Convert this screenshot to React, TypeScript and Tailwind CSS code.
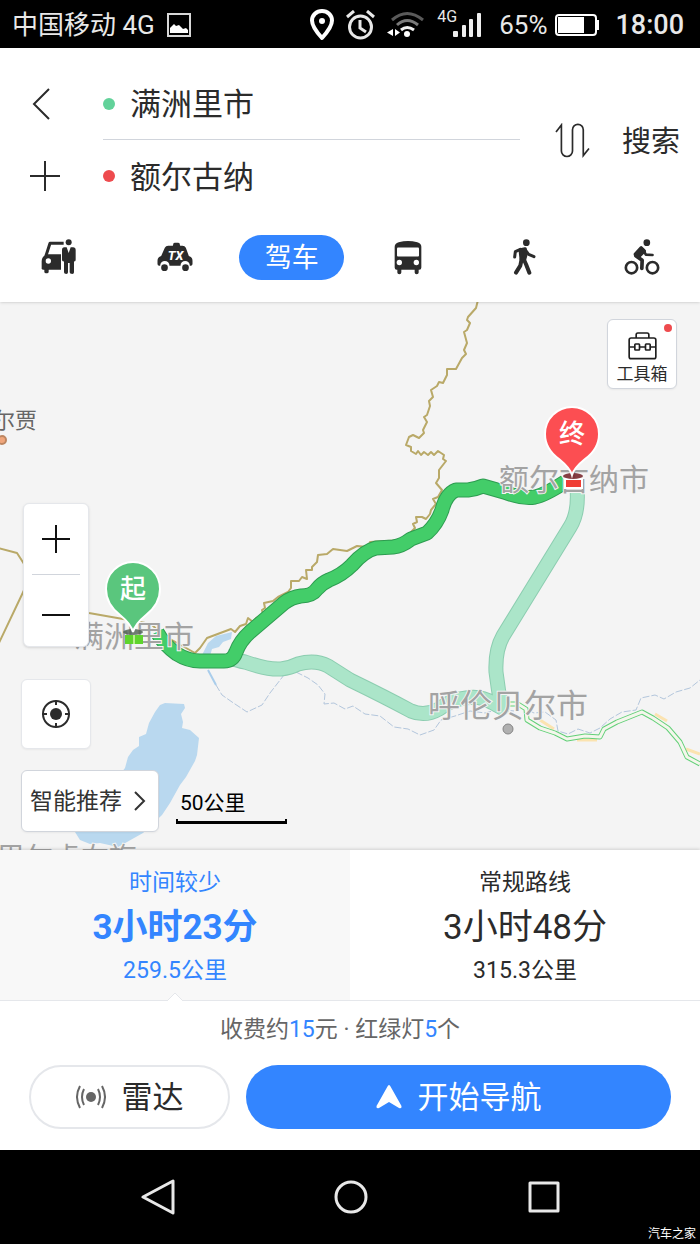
import { useState, type ReactNode } from "react";

const CarServiceIcon = () => (
  <svg width="35" height="36" viewBox="0 0 105 108" fill="none">
    <path d="M15 50 L27 13 H68" stroke="#2b2b2b" strokeWidth="9" strokeLinejoin="round" />
    <path d="M2 66 Q2 56 14 46 H60 V92 H6 Q2 92 2 88 Z" fill="#2b2b2b" />
    <rect x="10" y="86" width="13" height="17" rx="5" fill="#2b2b2b" />
    <circle cx="22" cy="66" r="8" fill="#fff" />
    <circle cx="83" cy="10" r="9" fill="#2b2b2b" />
    <path
      d="M70 25 H77 L83 42 L89 25 H96 Q104 25 104 33 V62 Q104 68 99 67 V100 Q99 105 94 105 Q86 105 86 100 V72 H81 V100 Q81 105 76 105 Q69 105 69 100 V67 Q63 68 63 62 V33 Q63 25 70 25 Z"
      fill="#2b2b2b"
    />
  </svg>
);

const TaxiIcon = () => (
  <svg width="36" height="30" viewBox="0 0 107 90">
    <path
      d="M47 11 L49 4 Q50 2 53 2 H63 Q66 2 67 4 L69 11 H76 Q83 11 86 17 L95 42 Q106 45 106 56 V66 Q106 71 101 71 H98 A14 14 0 0 0 70 71 H37 A14 14 0 0 0 9 71 H6 Q1 71 1 66 V56 Q1 45 12 42 L23 17 Q26 11 33 11 Z"
      fill="#2b2b2b"
    />
    <circle cx="22" cy="77" r="10" fill="#2b2b2b" />
    <circle cx="85" cy="77" r="10" fill="#2b2b2b" />
    <text x="55" y="55" textAnchor="middle" fill="#fff" className="font-[Roboto] text-[38px] font-extrabold italic">
      TX
    </text>
  </svg>
);

const BusIcon = () => (
  <svg width="28" height="35" viewBox="0 0 84 104">
    <path
      d="M2 20 Q2 9 14 6 Q42 -1 70 6 Q82 9 82 20 V82 Q82 89 76 89 H74 V97 Q74 102 68 102 Q62 102 62 97 V89 H22 V97 Q22 102 16 102 Q10 102 10 97 V89 H8 Q2 89 2 82 Z"
      fill="#2b2b2b"
    />
    <rect x="9" y="22" width="66" height="27" rx="3" fill="#fff" />
    <circle cx="16" cy="67" r="8" fill="#fff" />
    <circle cx="67" cy="67" r="8" fill="#fff" />
  </svg>
);

const WalkIcon = () => (
  <svg width="23" height="36" viewBox="0 0 69 108" fill="none" stroke="#2b2b2b" strokeLinecap="round" strokeLinejoin="round">
    <circle cx="40" cy="11" r="10" fill="#2b2b2b" stroke="none" />
    <path d="M22 33 L36 30 L38 48 L34 62 L25 60 Z" fill="#2b2b2b" strokeWidth="11" />
    <path d="M22 31 L7 38 L5 54" strokeWidth="9" />
    <path d="M38 34 L47 46 L63 53" strokeWidth="9" />
    <path d="M26 60 L22 80 L9 101" strokeWidth="12" />
    <path d="M32 60 L40 78 L49 101" strokeWidth="12" />
  </svg>
);

const BikeIcon = () => (
  <svg width="36" height="36" viewBox="0 0 107 108" fill="none" stroke="#2b2b2b" strokeLinecap="round" strokeLinejoin="round">
    <circle cx="22" cy="86" r="17" strokeWidth="8" />
    <circle cx="85" cy="86" r="17" strokeWidth="8" />
    <circle cx="68" cy="11" r="10" fill="#2b2b2b" stroke="none" />
    <path d="M51 27 L34 46 L42 54 L60 36 Z" fill="#2b2b2b" strokeWidth="11" />
    <path d="M57 32 L65 47 L85 48" strokeWidth="8" />
    <path d="M35 50 L54 64 L53 88" strokeWidth="11" />
  </svg>
);

const modes: { label: string; icon?: ReactNode }[] = [
  { label: "专车", icon: <CarServiceIcon key="car" /> },
  { label: "打车", icon: <TaxiIcon key="taxi" /> },
  { label: "驾车" },
  { label: "公交", icon: <BusIcon key="bus" /> },
  { label: "步行", icon: <WalkIcon key="walk" /> },
  { label: "骑行", icon: <BikeIcon key="bike" /> },
];

const routes = [
  { name: "时间较少", time: "3小时23分", distance: "259.5公里" },
  { name: "常规路线", time: "3小时48分", distance: "315.3公里" },
];

const MAIN_ROUTE =
  "M157 632 Q164 645 177 654 Q188 661 200 661 H224 Q233 661 236 652 Q240 641 250 632 L284 603 Q292 597 301 596 Q312 596 317 589 Q322 583 329 580 Q342 575 352 565 Q364 551 376 548 L393 547 Q402 546 411 539 L427 533 Q437 524 442 510 Q446 494 456 490 H468 Q476 489 483 486 L504 492 Q522 499 535 497 Q545 495 565 482";

const ALT_ROUTE =
  "M226 656 Q238 661 245 662 Q268 670 281 669 Q290 668 298 664 Q315 659 328 666 L350 680 Q385 697 411 711 Q425 717 439 709 Q452 699 466 698 Q480 695 493 703 L502 708 Q498 690 496 672 Q495 650 503 636 L570 527 Q579 513 577 488";

const HIGHWAY =
  "M508 704 L518 704 L526 709 L527 720 L540 728 L555 733 L567 739 L585 736 L600 737 L604 729 L617 722 L642 712 L653 718 L668 728 L680 742 L687 757 L700 764";

const BORDER =
  "M478 300 L476 308 L468 317 L467 320 L470 323 L467 330 L464 332 L467 343 L464 350 L466 354 L462 358 L456 369 L447 369 L447 375 L443 383 L439 382 L437 386 L431 390 L433 397 L429 401 L430 406 L427 415 L424 417 L427 422 L423 430 L424 433 L419 438 L413 435 L409 437 L406 445 L411 447 L411 451 L416 454 L418 451 L421 455 L424 452 L428 455 L431 452 L434 455 L438 451 L444 455 L443 459 L446 461 L439 470 L439 478 L436 483 L442 490 L438 497 L433 499 L436 504 L431 510 L430 514 L426 519 L422 517 L416 517 L417 522 L413 524 L415 528 L403 540 L370 542 L368 547 L357 546 L347 551 L333 549 L327 554 L318 555 L317 562 L312 567 L312 570 L306 570 L307 579 L302 577 L299 581 L291 581 L291 588 L288 592 L278 597 L273 601 L264 603 L265 608 L262 610 L263 614 L256 618 L253 622 L248 618 L246 624 L240 626 L235 632 L231 629 L223 632 L207 638 L200 648 L195 653 L163 635 L151 624 L123 619 L89 613 L60 606";

const MapCanvas = () => (
  <svg
    className="absolute inset-0 h-full w-full font-['Noto_Sans_CJK_SC',sans-serif]"
    viewBox="0 302 700 548"
    preserveAspectRatio="xMidYMid slice"
    fill="none"
  >
    {/* lakes */}
    <path
      d="M160 705 L165 703 L184 704 L185 708 L181 714 L183 722 L182 728 L190 730 L199 738 L197 755 L195 761 L186 777 L180 785 L170 803 L162 815 L143 833 L127 842 L118 847 L100 843 L90 844 L80 840 L75 832 L100 800 L125 768 L128 757 L133 750 L139 746 L139 737 L146 734 L149 723 L155 712 Z"
      fill="#b9d8ef"
    />
    <path d="M201 657 L208 643 L216 636 L232 632 L231 639 L223 642 L219 647 L212 649 L210 656 Z" fill="#b9d8ef" />
    <path d="M208 670 L216 685" stroke="#a9cdeb" strokeWidth="2" />

    {/* rivers */}
    <g stroke="#b3c6dc" strokeWidth="1" strokeDasharray="7 2">
      <path d="M216 685 L222 695 L232 702 L247 712 L262 705 L270 693 L284 675 L296 672 L308 678 L318 685 L325 694 L324 704 L334 703 L345 709 L353 706 L365 714 L380 716 L394 727 L408 729 L420 735 L434 730 L441 720 L455 716 L470 711 L485 713 L500 709 L514 711" />
      <path d="M520 706 L534 713 L545 712 L556 720 L558 731 L568 734 L578 729 L590 733 L600 728 L610 719 L622 712 L636 710 L641 698 L655 695 L664 699 L676 692 L690 688 L700 680" />
    </g>

    {/* boundaries */}
    <g stroke="#b9a968" strokeWidth="2" strokeLinejoin="round">
      <path d={BORDER} />
      <path d="M-2 548 L17 553 L26 567 M26 586 L-2 645" />
    </g>

    {/* highway heading east */}
    <path d="M540 720 L554 729 M577 740 L597 740 M655 714 L667 721 M686 749 L700 754" stroke="#fbe3b0" strokeWidth="3" />
    <g strokeLinejoin="round">
      <path d={HIGHWAY} stroke="#62d078" strokeWidth="5" />
      <path d={HIGHWAY} stroke="#f4f6ec" strokeWidth="3" />
    </g>

    {/* routes */}
    <g strokeLinejoin="round">
      <path d={ALT_ROUTE} stroke="#8ccdb0" strokeWidth="15" />
      <path d={ALT_ROUTE} stroke="#abe5c9" strokeWidth="13" />
      <path d={MAIN_ROUTE} stroke="#2d9c50" strokeWidth="15" />
      <path d={MAIN_ROUTE} stroke="#43cd69" strokeWidth="13" />
    </g>

    {/* city labels */}
    <circle cx="508" cy="729" r="5" fill="#b0b0b0" stroke="#858585" strokeWidth="1" />
    <circle cx="2" cy="440" r="4" fill="#f0a67c" stroke="#bd8661" strokeWidth="2" />
    <text x="37" y="428" textAnchor="end" fill="#666" className="text-[22px]">
      尔贾
    </text>
    <g fill="#a3a3a3" stroke="#f4f4f4" strokeWidth="2" paintOrder="stroke">
      <text x="74" y="647" className="text-[30px]">
        满洲里市
      </text>
      <text x="499" y="490" className="text-[30px]">
        额尔古纳市
      </text>
      <text x="428" y="717" className="text-[32px]">
        呼伦贝尔市
      </text>
      <text x="137" y="868" textAnchor="end" className="text-[28px]">
        新巴尔虎右旗
      </text>
    </g>

    {/* start pin */}
    <rect x="125" y="635" width="18" height="9" fill="#5fd42c" />
    <path d="M134 635 V644" stroke="#b6ee8e" strokeWidth="2" />
    <ellipse cx="133" cy="632" rx="10" ry="3" fill="#4d5f50" fillOpacity="0.8" />
    <path
      d="M133 632 Q131 624 120 615 Q106 604 106 589 A27 27 0 0 1 160 589 Q160 604 146 615 Q135 624 133 632 Z"
      fill="#5ac67d"
      stroke="#fff"
      strokeWidth="2"
    />
    <text x="133" y="598" textAnchor="middle" fill="#fff" className="text-[26px] font-medium">
      起
    </text>

    {/* end pin */}
    <rect x="565" y="479" width="17" height="9" fill="#f03e35" stroke="#fff" strokeWidth="2" />
    <ellipse cx="573" cy="476" rx="10" ry="3" fill="#7a2a30" fillOpacity="0.9" />
    <path
      d="M572 475 Q570 468 559 459 Q545 449 545 434 A27 27 0 0 1 599 434 Q599 449 585 459 Q574 468 572 475 Z"
      fill="#fc4e52"
      stroke="#fff"
      strokeWidth="2"
    />
    <text x="572" y="443" textAnchor="middle" fill="#fff" className="text-[26px] font-medium">
      终
    </text>
  </svg>
);

function StatusBar() {
  return (
    <div className="flex h-12 items-center justify-between bg-black pt-[2px] pr-4 pl-3 text-[26px] leading-[46px] text-[#e8e8e8]">
      <div className="flex items-center gap-3">
        <span>中国移动 4G</span>
        <svg width="24" height="24" viewBox="0 0 24 24">
          <rect x="1" y="1" width="22" height="22" fill="none" stroke="#d8d8d8" strokeWidth="2" />
          <path d="M3 20 V15 L7 11 L9 13 L12 12 L16 16 L19 15 L21 17 V20 Z" fill="#fff" />
        </svg>
      </div>
      <div className="flex items-center">
        <svg className="mr-3" width="24" height="32" viewBox="0 0 24 32" fill="none" stroke="#fff">
          <path d="M12 29 Q2 18 2 11.500 A10 9.500 0 0 1 22 11.500 Q22 18 12 29 Z" strokeWidth="4" strokeLinejoin="round" />
          <circle cx="12" cy="12" r="3" fill="#fff" stroke="none" />
        </svg>
        <svg className="mr-3" width="29" height="30" viewBox="0 0 29 30" fill="none" stroke="#e8e8e8" strokeWidth="3">
          <circle cx="14.500" cy="17" r="11" />
          <path d="M14 10 V18 L20 22 M1 7 L8 1 M28 7 L21 1" />
        </svg>
        <svg className="mr-3" width="38" height="28" viewBox="0 0 38 28" fill="none">
          <path d="M5 9 Q20 -4 36 9" stroke="#5a5a5a" strokeWidth="3" />
          <path d="M10 14 Q20 5 31 14" stroke="#7a7a7a" strokeWidth="3" />
          <path d="M14 19 Q20 14 27 19" stroke="#f0f0f0" strokeWidth="3" />
          <circle cx="20" cy="23" r="3" fill="#fff" />
          <path d="M6 18 V25 L0 21.500 Z M8 18 V25 L13 21.500 Z" fill="#fff" />
        </svg>
        <div className="relative mr-4 h-8 w-[46px]">
          <span className="absolute top-0 left-0 text-[16px] leading-4">4G</span>
          <svg className="absolute right-[2px] bottom-1" width="29" height="24" viewBox="0 0 29 24" fill="#eee">
            <rect x="1" y="18" width="5" height="6" rx="1" />
            <rect x="10" y="12" width="4" height="12" rx="1" />
            <rect x="17" y="6" width="4" height="18" rx="1" />
            <rect x="25" y="0" width="4" height="24" rx="1" />
          </svg>
        </div>
        <span className="mr-2">65%</span>
        <svg className="mr-4" width="44" height="22" viewBox="0 0 44 22">
          <rect x="1" y="1" width="40" height="20" rx="3" fill="none" stroke="#fff" strokeWidth="2" />
          <rect x="3" y="3" width="26" height="16" fill="#fff" />
          <rect x="42" y="6" width="2" height="10" fill="#fff" />
        </svg>
        <span className="text-[27px] font-medium">18:00</span>
      </div>
    </div>
  );
}

function SearchHeader() {
  const [mode, setMode] = useState("驾车");

  return (
    <header className="relative z-10 bg-white pt-5 shadow-sm">
      <div className="flex items-center pr-5">
        <div className="flex w-[103px] flex-col pl-[29px]">
          <button aria-label="返回" className="flex h-[72px] items-center">
            <svg width="32" height="32" viewBox="0 0 32 32" fill="none" stroke="#2b2b2b" strokeWidth="2">
              <path d="M20 1 L5 16 L20 31" />
            </svg>
          </button>
          <button aria-label="添加途经点" className="flex h-[72px] items-center">
            <svg width="32" height="32" viewBox="0 0 32 32" stroke="#2b2b2b" strokeWidth="2">
              <path d="M16 1 V31 M1 16 H31" />
            </svg>
          </button>
        </div>

        <div className="flex-1 divide-y divide-gray-300">
          <label className="flex h-[72px] items-center gap-[15px]">
            <span className="size-3 shrink-0 rounded-full bg-[#62d29a]" />
            <input aria-label="起点" defaultValue="满洲里市" className="w-full min-w-0 pt-[3px] text-[31px] leading-10 text-[#2b2b2b] outline-none" />
          </label>
          <label className="flex h-[72px] items-center gap-[15px]">
            <span className="size-3 shrink-0 rounded-full bg-[#ee4b4e]" />
            <input aria-label="终点" defaultValue="额尔古纳" className="w-full min-w-0 pt-[3px] text-[31px] leading-10 text-[#2b2b2b] outline-none" />
          </label>
        </div>

        <button aria-label="交换起终点" className="mr-8 ml-[35px]">
          <svg width="35" height="35" viewBox="0 0 104 104" fill="none" stroke="#2b2b2b" strokeWidth="5">
            <path d="M3 27 L19 6 V83 A16 16 0 0 0 52 83 V20 A16 16 0 0 1 84 20 V97 L101 76" />
          </svg>
        </button>
        <button className="pt-[3px] text-[29px] leading-10 text-[#2b2b2b]">搜索</button>
      </div>

      <nav className="grid h-[90px] grid-cols-6 items-center">
        {modes.map((m) => (
          <button
            key={m.label}
            aria-label={m.label}
            onClick={() => setMode(m.label)}
            className={
              mode === m.label
                ? "mx-[6px] flex h-[45px] items-center justify-center rounded-full bg-[#3385ff] pt-[3px] text-[27px] text-white"
                : "mx-[6px] flex h-[45px] items-center justify-center rounded-full text-[27px]"
            }
          >
            {m.icon ?? m.label}
          </button>
        ))}
      </nav>
    </header>
  );
}

function MapView() {
  return (
    <section className="relative min-h-[400px] flex-1 overflow-hidden bg-[#f4f4f4]">
      <MapCanvas />

      <button className="absolute top-[17px] right-[23px] flex h-[70px] w-[70px] flex-col items-center justify-end rounded-md border border-gray-300 bg-white shadow-xs">
        <span className="absolute top-1 right-1 size-2 rounded-full bg-[#ee4b4e]" />
        <svg width="29" height="28" viewBox="0 0 86 84" fill="none" stroke="#1f1f1f" strokeWidth="5">
          <path d="M24 18 V8 Q24 3 29 3 H57 Q62 3 62 8 V18" />
          <rect x="3" y="18" width="80" height="62" rx="6" />
          <path d="M3 45 H20 M34 45 H52 M66 45 H83" />
          <rect x="20" y="36" width="14" height="18" rx="2" />
          <rect x="52" y="36" width="14" height="18" rx="2" />
        </svg>
        <span className="text-[17px] leading-7 text-[#2b2b2b]">工具箱</span>
      </button>

      <div className="absolute bottom-[18px] left-[21px] flex flex-col items-start">
        <div className="mb-8 ml-[2px] flex w-[66px] flex-col items-center rounded-md border border-gray-200 bg-white shadow-sm">
          <button aria-label="放大" className="flex h-[70px] w-full items-center justify-center">
            <svg width="28" height="28" viewBox="0 0 28 28" stroke="#111" strokeWidth="2">
              <path d="M14 0 V28 M0 14 H28" />
            </svg>
          </button>
          <div className="h-px w-12 bg-gray-300" />
          <button aria-label="缩小" className="flex h-[71px] w-full items-center justify-center">
            <svg width="28" height="28" viewBox="0 0 28 28" stroke="#111" strokeWidth="2">
              <path d="M0 18 H28" />
            </svg>
          </button>
        </div>

        <button aria-label="定位" className="mb-[21px] flex size-[70px] items-center justify-center rounded-md border border-gray-200 bg-white shadow-xs">
          <svg width="30" height="30" viewBox="0 0 30 30" fill="none" stroke="#2b2b2b" strokeWidth="2">
            <circle cx="15" cy="15" r="13" />
            <circle cx="15" cy="15" r="6" fill="#2b2b2b" stroke="none" />
            <path d="M15 1 V6 M15 24 V29 M1 15 H6 M24 15 H29" />
          </svg>
        </button>

        <div className="flex items-end gap-[17px]">
          <button className="flex h-[62px] items-center gap-2 rounded-md border border-gray-300 bg-white px-2 text-[23px] text-[#333] shadow-xs">
            <span className="pt-[2px]">智能推荐</span>
            <svg width="20" height="20" viewBox="0 0 20 20" fill="none" stroke="#333" strokeWidth="2">
              <path d="M5 1 L14 10 L5 19" />
            </svg>
          </button>
          <div className="w-[111px] pb-2">
            <p className="pl-1 text-[21px] leading-8 text-black">50公里</p>
            <div className="h-[5px] border-x-2 border-b-3 border-black" />
          </div>
        </div>
      </div>
    </section>
  );
}

function RoutePanel() {
  const [selected, setSelected] = useState(0);

  return (
    <section className="relative z-10 bg-white shadow-[0_-1px_3px_rgba(0,0,0,0.15)]">
      <div className="grid grid-cols-2 border-b border-gray-200">
        {routes.map((r, i) => (
          <button
            key={r.name}
            onClick={() => setSelected(i)}
            className={
              selected === i
                ? "relative flex flex-col items-center bg-[#f8f8f8] pt-[15px] pb-[13px] text-[#3385ff]"
                : "relative flex flex-col items-center pt-[15px] pb-[13px] text-[#2b2b2b]"
            }
          >
            <span className="text-[23px] leading-9">{r.name}</span>
            <span className={selected === i ? "text-[35px] leading-[54px] font-bold" : "text-[35px] leading-[54px]"}>
              {r.time}
            </span>
            <span className="text-[23px] leading-8">{r.distance}</span>
            {selected === i && (
              <svg className="absolute -bottom-px left-1/2 -translate-x-1/2" width="16" height="9" viewBox="0 0 16 9">
                <path d="M0 9 L8 1 L16 9" fill="#fff" stroke="#e5e7eb" />
              </svg>
            )}
          </button>
        ))}
      </div>

      <p className="pt-[2px] pr-5 text-center text-[23px] leading-[54px] text-[#666]">
        收费约<span className="text-[#3385ff]">15</span>元 · 红绿灯<span className="text-[#3385ff]">5</span>个
      </p>

      <div className="flex gap-4 px-[29px] pt-2 pb-[21px]">
        <button className="flex h-16 w-[201px] items-center justify-center gap-4 rounded-full border-2 border-gray-200 text-[31px] text-[#2b2b2b]">
          <svg width="30" height="24" viewBox="0 0 30 24" fill="none" stroke="#666" strokeWidth="2">
            <circle cx="15" cy="12" r="5" fill="#666" stroke="none" />
            <path d="M8 4 Q4 12 8 20 M22 4 Q26 12 22 20 M4 1 Q-2 12 4 23 M26 1 Q32 12 26 23" />
          </svg>
          <span className="pt-[3px]">雷达</span>
        </button>
        <button className="flex h-16 flex-1 items-center justify-center gap-4 rounded-full bg-[#3385ff] text-[31px] text-white">
          <svg width="26" height="24" viewBox="0 0 26 24" fill="#fff">
            <path d="M13 0 Q14 0 14.500 1.500 L25.500 21 Q26 24 23 23 L13 17 L3 23 Q0 24 0.500 21 L11.500 1.500 Q12 0 13 0 Z" />
          </svg>
          <span className="pt-[3px]">开始导航</span>
        </button>
      </div>
    </section>
  );
}

function SystemNav() {
  return (
    <div className="relative z-10 grid h-[94px] grid-cols-3 items-center bg-black pr-15 pl-[62px]">
      <button aria-label="后退" className="flex justify-center">
        <svg width="34" height="36" viewBox="0 0 34 36" fill="none" stroke="#e8e8e8" strokeWidth="3" strokeLinejoin="round">
          <path d="M2 18 L32 2 V34 Z" />
        </svg>
      </button>
      <button aria-label="主屏幕" className="flex justify-center">
        <svg width="36" height="36" viewBox="0 0 36 36" fill="none" stroke="#e8e8e8" strokeWidth="3">
          <circle cx="18" cy="18" r="15" />
        </svg>
      </button>
      <button aria-label="最近任务" className="flex justify-center">
        <svg width="32" height="32" viewBox="0 0 32 32" fill="none" stroke="#e8e8e8" strokeWidth="3" strokeLinejoin="round">
          <rect x="2" y="2" width="28" height="28" />
        </svg>
      </button>
      <span className="absolute right-1 bottom-[2px] text-[12px] leading-4 text-white">汽车之家</span>
    </div>
  );
}

export default function App() {
  return (
    <div className="flex min-h-screen flex-col bg-white font-[Roboto,'Noto_Sans_CJK_SC',sans-serif]">
      <StatusBar />
      <SearchHeader />
      <MapView />
      <RoutePanel />
      <SystemNav />
    </div>
  );
}
